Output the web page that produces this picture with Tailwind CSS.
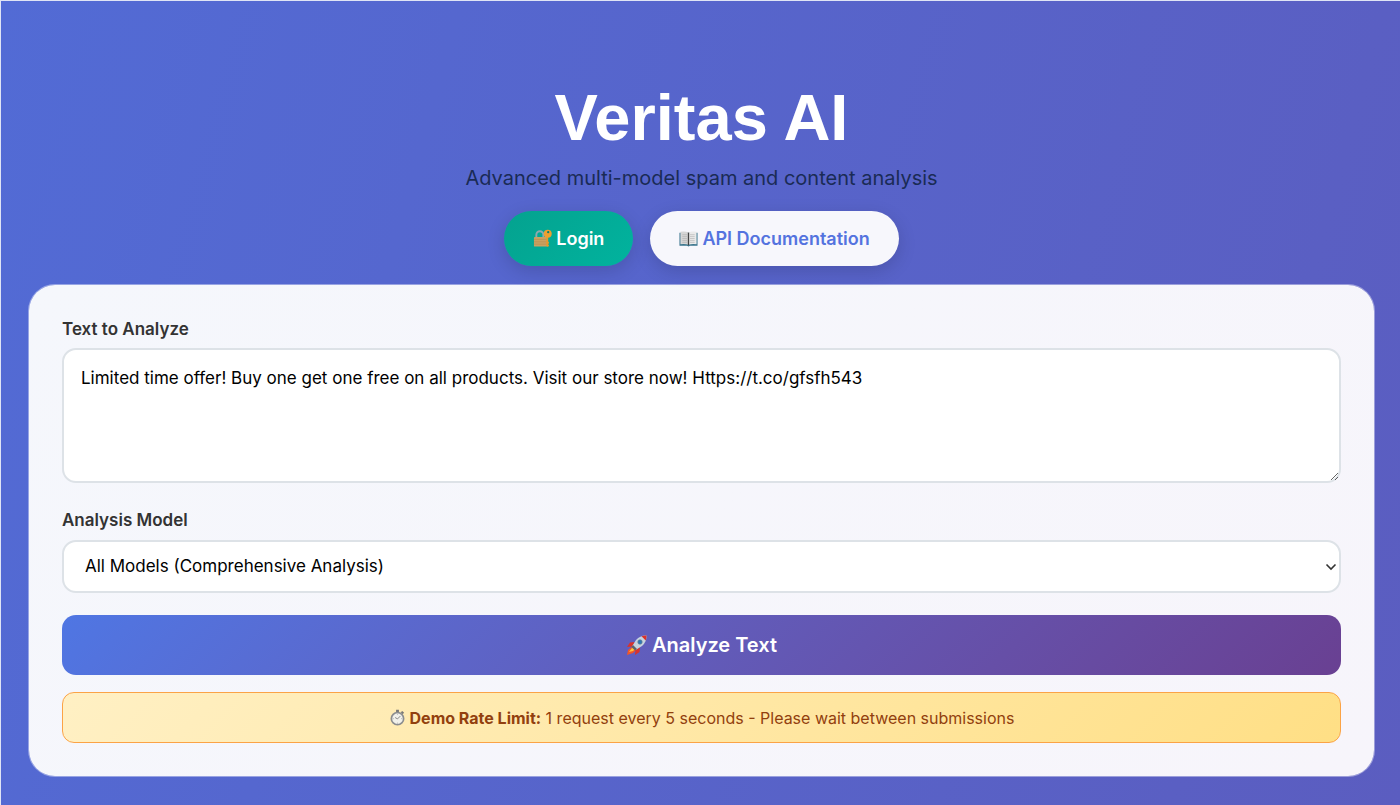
<!DOCTYPE html>
<html lang="en">
<head>
  <meta charset="UTF-8" />
  <meta name="viewport" content="width=device-width, initial-scale=1.0"/>
  <title>Veritas AI</title>
  <script src="https://cdn.jsdelivr.net/npm/@tailwindcss/browser@4"></script>
</head>
<body class="min-h-screen border-t border-l border-[#dfe4f5] bg-linear-105 from-[#526bd5] to-[#5b5dc0] bg-no-repeat pt-[81px] pr-[25px] pb-7 pl-[27px] font-['Inter',sans-serif]">
  <header class="flex flex-col items-center text-center">
    <h1 class="font-['Liberation_Sans',sans-serif] text-[65px] leading-[72px] font-bold text-white">Veritas AI</h1>
    <p class="mt-2 text-[20px] leading-8 text-[#1a2b55]">Advanced multi-model spam and content analysis</p>
    <nav class="mt-[17px] flex gap-[17px]">
      <a href="#login" class="flex h-[55px] items-center gap-1 rounded-full bg-linear-135 from-[#04a28f] to-[#01b39e] px-[29px] text-[18px] font-semibold text-white shadow-[0_5px_18px_rgba(0,0,0,0.15)]">
        <svg class="size-[19px]" viewBox="0 0 20 20" aria-hidden="true">
          <path d="M3.500 9V6a3.700 3.700 0 0 1 7.400 0v3" fill="none" stroke="#8fa8ad" stroke-width="2"/>
          <rect x="1" y="8.500" width="14" height="10" rx="1" fill="#c9a263"/>
          <path d="M1 11h14M1 13.500h14M1 16h14" stroke="#b58a4c" stroke-width=".6"/>
          <path d="M14 8.500v9l1.500 1.500 1.500-1.500-1-1.500 1-1.500-1-1.500V8.500z" fill="#e8982c"/>
          <circle cx="15.500" cy="5" r="4.200" fill="#eea02f"/>
          <circle cx="16" cy="3.300" r="1.200" fill="#087e70"/>
        </svg>
        Login
      </a>
      <a href="#docs" class="flex h-[55px] items-center gap-1 rounded-full bg-[#f7f7fc] px-[29px] text-[18px] font-semibold text-[#5473df] shadow-[0_5px_18px_rgba(0,0,0,0.15)]">
        <svg class="size-[19px]" viewBox="0 0 20 20" aria-hidden="true">
          <path d="M.5 4h19v13.500h-8l-1.500 1-1.500-1h-8z" fill="#39748c"/>
          <path d="M1.500 3q5-1 8.500.8v12.900q-3.500-1.500-8.500-.7z" fill="#d6d6d6"/>
          <path d="M18.500 3q-5-1-8.500.8v12.900q3.500-1.500 8.500-.7z" fill="#eaeaea"/>
          <path d="M10 3.800v13.200" stroke="#444" stroke-width="1.400"/>
          <path d="M3.500 6h5M3.500 8h5M3.500 10h5M3.500 12h5M3.500 14h5M11.500 6h5M11.500 8h5M11.500 10h5M11.500 12h5M11.500 14h5" stroke="#aaa" stroke-width=".6"/>
        </svg>
        API Documentation
      </a>
    </nav>
  </header>

  <main class="mt-[18px] rounded-[27px] border border-white/40 bg-linear-135 from-[#f5f7fc] to-[#f7f5fb] bg-clip-padding px-[33px] pt-8 pb-[33px]">
    <form onsubmit="return false">
      <label for="text" class="block text-[17px] leading-6 font-semibold text-[#333]">Text to Analyze</label>
      <textarea id="text" class="mt-[7px] block h-[135px] w-full resize-y rounded-[14px] border-2 border-[#dde2e7] bg-white px-[17px] py-[17px] text-[17px] leading-[22px] text-black outline-none focus:border-[#5473df]">Limited time offer! Buy one get one free on all products. Visit our store now! Https://t.co/gfsfh543</textarea>

      <label for="model" class="mt-[25px] block text-[17px] leading-6 font-semibold text-[#333]">Analysis Model</label>
      <div class="relative mt-2">
        <select id="model" class="block h-[53px] w-full appearance-none rounded-[14px] border-2 border-[#dde2e7] bg-white px-[21px] text-[17px] text-black outline-none focus:border-[#5473df]">
          <option>All Models (Comprehensive Analysis)</option>
        </select>
        <svg class="pointer-events-none absolute top-[23px] right-[4px] h-2 w-3" viewBox="0 0 12 8" fill="none" stroke="#333" stroke-width="1.600" aria-hidden="true">
          <path d="M1.500 1.500 6 6l4.500-4.500"/>
        </svg>
      </div>

      <button type="submit" class="mt-[22px] flex h-[60px] w-full items-center justify-center gap-1 rounded-[14px] bg-linear-135 from-[#4f76e3] to-[#694092] text-[20px] font-semibold text-white">
        <svg class="size-[22px]" viewBox="0 0 22 22" aria-hidden="true">
          <path d="M7 12 2 16l-1 5 6-2 4-4z" fill="#f0562a"/>
          <path d="m6 14-3 4 4-1 2-2z" fill="#ffc338"/>
          <path d="M9 8 4 8.500 1 13l5-.5zM14 13l-.5 5L9 21l.5-5z" fill="#d8332c"/>
          <path d="M20.500 1.500q-6-.5-10.500 4.500L6 12.500 9.500 16l6.500-4q5-4.500 4.500-10.500z" fill="#c6d3df"/>
          <path d="M20.500 1.500q-2.500-.2-5 .8l4.200 4.200q1-2.500.8-5z" fill="#d8332c"/>
          <path d="m7 11 4 4-2 1.500L5.500 13z" fill="#5a6470"/>
          <circle cx="14" cy="8" r="2.200" fill="#2a78b8" stroke="#64788c" stroke-width=".7"/>
        </svg>
        Analyze Text
      </button>
    </form>

    <div class="mt-[17px] flex h-[51px] items-center justify-center gap-1 rounded-xl border border-[#fba346] bg-linear-135 from-[#fff0c4] to-[#ffdf85] text-[16px] text-[#92400e]">
      <svg class="size-[17px]" viewBox="0 0 18 18" aria-hidden="true">
        <path d="M7.500.8h3v2.500h-3zM14 2l2 2-1.500 1.500-2-2z" fill="#777"/>
        <circle cx="9" cy="10.200" r="6.500" fill="#f1f1eb" stroke="#8b8d8f" stroke-width="1.800"/>
        <path d="m9 10.500 3-3M9 10.500 6.500 9" stroke="#777" stroke-width=".9"/>
        <path d="M9 5v1M9 14.500v1M4 10.200h1M13 10.200h1" stroke="#999" stroke-width=".8"/>
      </svg>
      <p><strong class="font-bold">Demo Rate Limit:</strong> 1 request every 5 seconds - Please wait between submissions</p>
    </div>
  </main>
</body>
</html>
